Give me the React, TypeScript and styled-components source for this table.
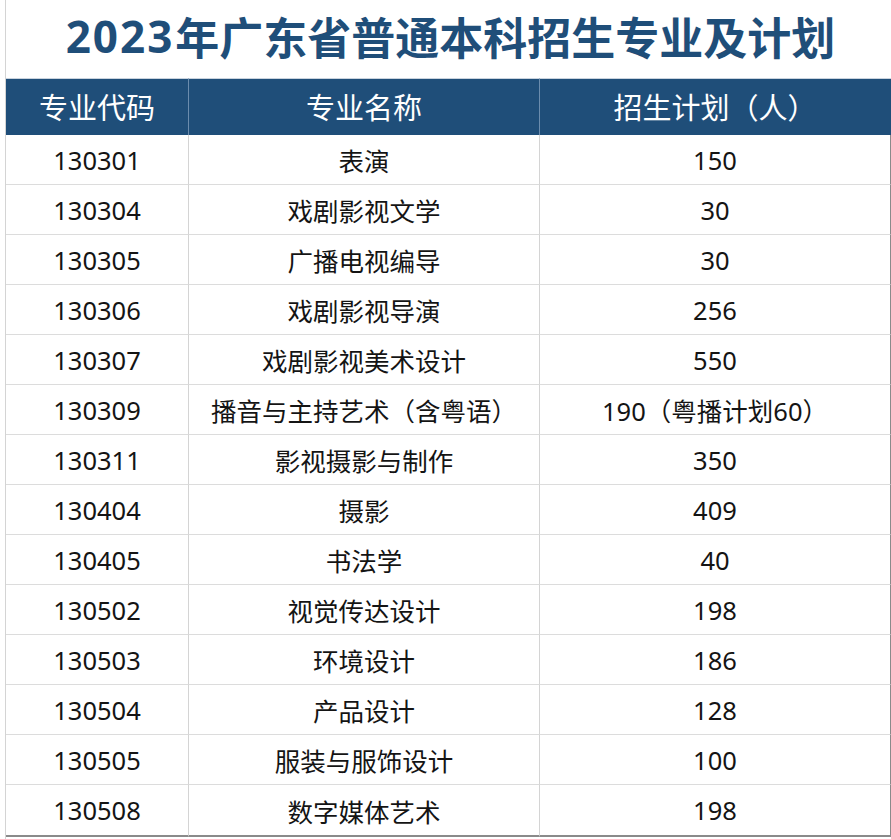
import styled, { createGlobalStyle } from 'styled-components';

const GlobalStyle = createGlobalStyle`
  html, body {
    margin: 0;
    padding: 0;
    background: #ffffff;
  }
  body {
    font-family: "Noto Sans", "Noto Sans CJK SC", sans-serif;
  }
`;

const rows = [
  ['130301', '表演', '150'],
  ['130304', '戏剧影视文学', '30'],
  ['130305', '广播电视编导', '30'],
  ['130306', '戏剧影视导演', '256'],
  ['130307', '戏剧影视美术设计', '550'],
  ['130309', '播音与主持艺术（含粤语）', '190（粤播计划60）'],
  ['130311', '影视摄影与制作', '350'],
  ['130404', '摄影', '409'],
  ['130405', '书法学', '40'],
  ['130502', '视觉传达设计', '198'],
  ['130503', '环境设计', '186'],
  ['130504', '产品设计', '128'],
  ['130505', '服装与服饰设计', '100'],
  ['130508', '数字媒体艺术', '198'],
];

export default function App() {
  return (
    <>
      <GlobalStyle />
      <Page>
        <Sheet>
          <Title>
            <Year>2023</Year>年广东省普通本科招生专业及计划
          </Title>
          <Table>
            <HeadCell>专业代码</HeadCell>
            <HeadCell>专业名称</HeadCell>
            <HeadCell $last>招生计划（人）</HeadCell>
            {rows.map(([code, name, plan], i) => (
              <Row key={code} $final={i === rows.length - 1}>
                <Cell>{code}</Cell>
                <Cell>{name}</Cell>
                <Cell $last>{plan}</Cell>
              </Row>
            ))}
          </Table>
        </Sheet>
      </Page>
    </>
  );
}

const Page = styled.div`
  width: 891px;
  height: 839px;
  padding-left: 5px;
  box-sizing: border-box;
  overflow: hidden;
`;

const Sheet = styled.div`
  height: 100%;
  border-left: 1px solid #d4d4d4;
  display: flex;
  flex-direction: column;
`;

const Title = styled.h1`
  margin: 0;
  height: 78px;
  padding-bottom: 6px;
  padding-left: 4px;
  box-sizing: border-box;
  display: flex;
  align-items: center;
  justify-content: center;
  font-size: 44px;
  font-weight: 700;
  color: #1f4e79;
`;

const Year = styled.span`
  letter-spacing: 2px;
  margin-right: 1px;
`;

const Table = styled.div`
  display: grid;
  grid-template-columns: 183px 351px 1fr;
`;

const HeadCell = styled.div<{ $last?: boolean }>`
  height: 57px;
  box-sizing: border-box;
  background: #1f4e79;
  border-top: 1px solid #c9d3de;
  border-right: ${(p) => (p.$last ? 'none' : '1px solid #6b8cad')};
  display: flex;
  align-items: center;
  justify-content: center;
  padding-bottom: 2px;
  padding-right: ${(p) => (p.$last ? '1px' : '0')};
  color: #ffffff;
  font-size: 29px;
  font-weight: 400;
  white-space: nowrap;
`;

const Row = styled.div<{ $final?: boolean }>`
  display: contents;

  & > div {
    border-bottom: ${(p) => (p.$final ? '2px solid #8a8a8a' : '1px solid #dcdcdc')};
    height: ${(p) => (p.$final ? '52px' : '50px')};
  }
`;

const Cell = styled.div<{ $last?: boolean }>`
  box-sizing: border-box;
  display: flex;
  align-items: center;
  justify-content: center;
  border-right: 1px solid ${(p) => (p.$last ? '#8a8a8a' : '#d4d4d4')};
  color: #141414;
  font-size: 25.5px;
  white-space: nowrap;
`;
